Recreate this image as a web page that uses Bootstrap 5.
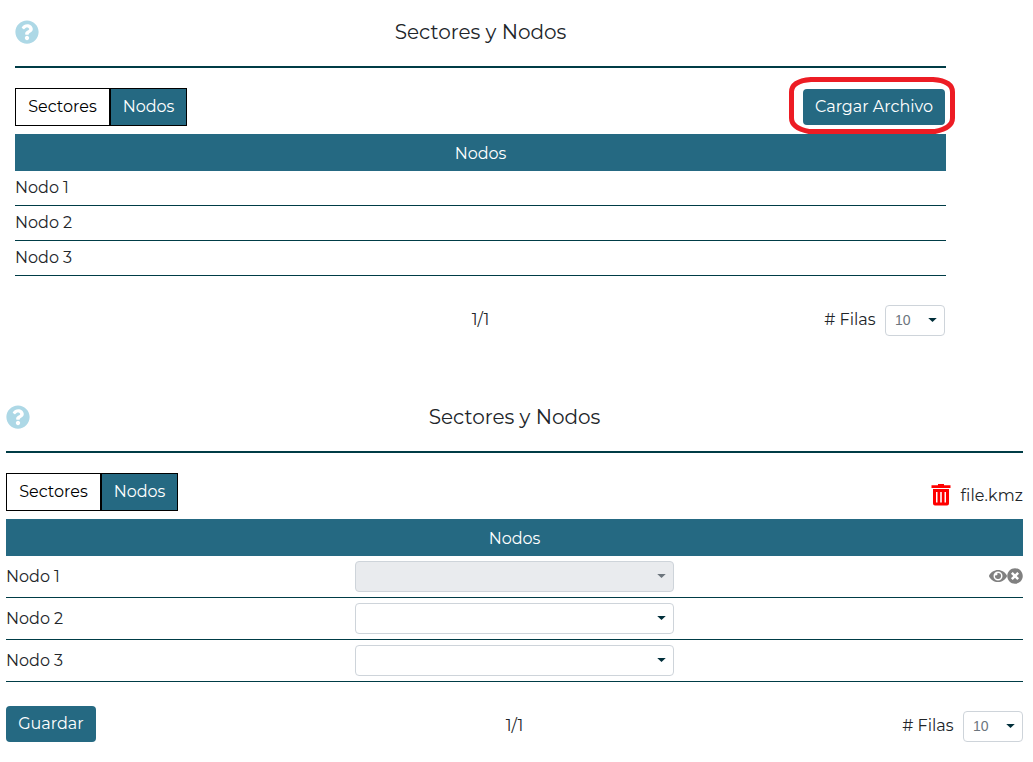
<!DOCTYPE html>
<html lang="es">
<head>
<meta charset="utf-8">
<meta name="viewport" content="width=device-width, initial-scale=1">
<title>Sectores y Nodos</title>
<link href="https://cdn.jsdelivr.net/npm/bootstrap@5.3.0/dist/css/bootstrap.min.css" rel="stylesheet">
<style>
body{font-family:Montserrat,Inter,"Open Sans",sans-serif;font-size:16px;color:#212529;background:#fff;overflow:hidden}
.panel-a{width:931px;margin-left:15px;height:385px}
.panel-b{width:1017px;margin-left:6px;height:377px}
.title-bar{height:68px;border-bottom:2px solid #003c46;padding-bottom:2px}
.title-bar h1{font-size:20px;font-weight:400;margin:0;line-height:24px}
.help{width:24px;height:24px;top:20px;color:#add8e6}
.tools{height:66px;padding-top:20px}
.tabs .btn{height:38px;border:1px solid #000;border-radius:0;padding:5px 0 6px;color:#000;width:95px}
.tabs .btn.active{background:#256982;color:#fff;border-color:#000;width:77px}
.btn-main,.btn-main:hover{background:#256982;color:#fff;border:0;height:36px;padding:6px 0;border-radius:4px}
.load{width:142px;margin:1px 1px 0 0}
.save{width:90px}
.ring{position:absolute;left:-14px;top:-12px;width:166px;height:57px}
.head-row{background:#256982;color:#fff;height:37px;padding-top:2px}
.item{border-bottom:1px solid #003c46;height:35px}
.panel-a .item{padding-bottom:1px}
.panel-b .item{height:42px}
.combo{height:31px;border:1px solid #ced4da;border-radius:4px;background:#fff}
.combo.wide{width:319px;padding-right:7px}
.combo.off{background:#e9ebee}
.combo.off .tri{background:#6c757d}
.tri{width:9px;height:4px;margin-bottom:1px;background:#002e3a;clip-path:polygon(3% 0,97% 0,50% 100%)}
.rows-num{width:60px;padding:0 7px 0 9px;font-family:"Liberation Sans",Arial,sans-serif;font-size:14px;color:#6c757d}
.foot{margin-top:29px;height:31px}
.panel-b .foot{margin-top:24px;height:36px}
.grid3{display:grid;grid-template-columns:1fr 319px 1fr;align-items:center}
.pager{display:grid;grid-template-columns:1fr auto 1fr}
.panel-a .rows-box{padding-right:1px}
.panel-a .mid{padding-bottom:2px}
.panel-b .mid{padding-bottom:4px}
.filas{margin-right:9.5px;padding-bottom:2px}
.file{gap:10px;height:42px;margin-top:1px}
.file span{padding-top:2px;letter-spacing:.1px}
.actions{padding-bottom:1px}
</style>
</head>
<body>
<svg class="d-none">
<symbol id="q" viewBox="0 0 512 512"><path fill="currentColor" d="M504 256c0 137-111 248-248 248S8 393 8 256 119 8 256 8s248 111 248 248zM262.700 90c-54.500 0-89.300 23-116.500 63.800-3.500 5.300-2.400 12.400 2.700 16.300l34.700 26.300c5.200 3.900 12.600 3 16.700-2.100 17.900-22.700 30.100-35.800 57.300-35.800 20.400 0 45.700 13.100 45.700 33 0 15-12.400 22.700-32.500 34C247.100 238.500 216 254.900 216 296v4c0 6.600 5.400 12 12 12h56c6.600 0 12-5.400 12-12v-1.300c0-28.500 83.200-29.600 83.200-106.700 0-58-60.200-102-116.500-102zM256 338c-25.400 0-46 20.600-46 46s20.600 46 46 46 46-20.600 46-46-20.600-46-46-46z"/></symbol>
</svg>

<section class="panel-a">
  <header class="title-bar position-relative d-flex align-items-center justify-content-center">
    <svg class="help position-absolute start-0"><use href="#q"/></svg>
    <h1>Sectores y Nodos</h1>
  </header>
  <div class="tools d-flex justify-content-between align-items-start">
    <div class="tabs d-flex"><button class="btn">Sectores</button><button class="btn active">Nodos</button></div>
    <div class="position-relative load">
      <button class="btn btn-main w-100 d-block">Cargar Archivo</button>
      <svg class="ring" viewBox="0 0 166 57" fill="none" stroke="#ed1c24" stroke-width="5"><path d="M22 2.500H144Q163.500 4 163.500 15V41Q163.500 51 146 54.500H20Q2.500 51 2.500 41V15Q2.500 4 22 2.500Z"/></svg>
    </div>
  </div>
  <div class="head-row d-flex align-items-center justify-content-center">Nodos</div>
  <div class="item d-flex align-items-center">Nodo 1</div>
  <div class="item d-flex align-items-center">Nodo 2</div>
  <div class="item d-flex align-items-center">Nodo 3</div>
  <div class="foot pager align-items-center">
    <span></span><span class="mid">1/1</span>
    <div class="d-flex align-items-center justify-content-end rows-box"><span class="filas">#&nbsp;Filas</span>
      <div class="combo rows-num d-flex align-items-center justify-content-between"><span>10</span><i class="tri"></i></div></div>
  </div>
</section>

<section class="panel-b">
  <header class="title-bar position-relative d-flex align-items-center justify-content-center">
    <svg class="help position-absolute start-0"><use href="#q"/></svg>
    <h1>Sectores y Nodos</h1>
  </header>
  <div class="tools d-flex justify-content-between align-items-start">
    <div class="tabs d-flex"><button class="btn">Sectores</button><button class="btn active">Nodos</button></div>
    <div class="d-flex align-items-center file">
      <svg width="20" height="22" viewBox="0 0 20 22" fill="red"><path fill-rule="evenodd" d="M7 0h6v1.200h6.500V4H.5V1.200H7zM2 5h16v14.500q0 2-2 2H4q-2 0-2-2zM5 8v10.500h1.500V8zM9.200 8v10.500h1.600V8zM13.500 8v10.500H15V8z"/></svg>
      <span>file.kmz</span>
    </div>
  </div>
  <div class="head-row d-flex align-items-center justify-content-center">Nodos</div>
  <div class="item grid3"><span>Nodo 1</span><div class="combo wide off d-flex align-items-center justify-content-end"><i class="tri"></i></div>
    <div class="d-flex justify-content-end align-items-center actions">
      <svg width="18" height="16" viewBox="0 0 576 512" fill="#808080"><path d="M572.500 241.400C518.300 135.600 410.900 64 288 64S57.700 135.600 3.500 241.400a32.400 32.400 0 0 0 0 29.200C57.700 376.400 165.100 448 288 448s230.300-71.600 284.500-177.400a32.400 32.400 0 0 0 0-29.200zM288 400a144 144 0 1 1 144-144 143.900 143.900 0 0 1-144 144zm0-240a95.300 95.300 0 0 0-25.300 3.800 47.900 47.900 0 0 1-66.900 66.900A95.800 95.800 0 1 0 288 160z"/></svg>
      <svg width="16" height="16" viewBox="0 0 512 512" fill="#808080"><path d="M256 8C119 8 8 119 8 256s111 248 248 248 248-111 248-248S393 8 256 8zm121.600 313.100c4.700 4.700 4.700 12.300 0 17L338 377.600c-4.700 4.700-12.300 4.700-17 0L256 312l-65.100 65.600c-4.700 4.700-12.300 4.700-17 0L134.400 338c-4.700-4.700-4.700-12.300 0-17l65.600-65-65.600-65.100c-4.700-4.700-4.700-12.300 0-17l39.600-39.600c4.700-4.700 12.300-4.700 17 0l65 65.700 65.100-65.600c4.700-4.700 12.300-4.700 17 0l39.600 39.600c4.700 4.700 4.700 12.300 0 17L312 256z"/></svg>
    </div></div>
  <div class="item grid3"><span>Nodo 2</span><div class="combo wide d-flex align-items-center justify-content-end"><i class="tri"></i></div></div>
  <div class="item grid3"><span>Nodo 3</span><div class="combo wide d-flex align-items-center justify-content-end"><i class="tri"></i></div></div>
  <div class="foot pager align-items-end">
    <div><button class="btn btn-main save d-block">Guardar</button></div><span class="mid">1/1</span>
    <div class="d-flex align-items-center justify-content-end"><span class="filas">#&nbsp;Filas</span>
      <div class="combo rows-num d-flex align-items-center justify-content-between"><span>10</span><i class="tri"></i></div></div>
  </div>
</section>
<script src="https://cdn.jsdelivr.net/npm/bootstrap@5.3.0/dist/js/bootstrap.bundle.min.js"></script>
</body>
</html>
